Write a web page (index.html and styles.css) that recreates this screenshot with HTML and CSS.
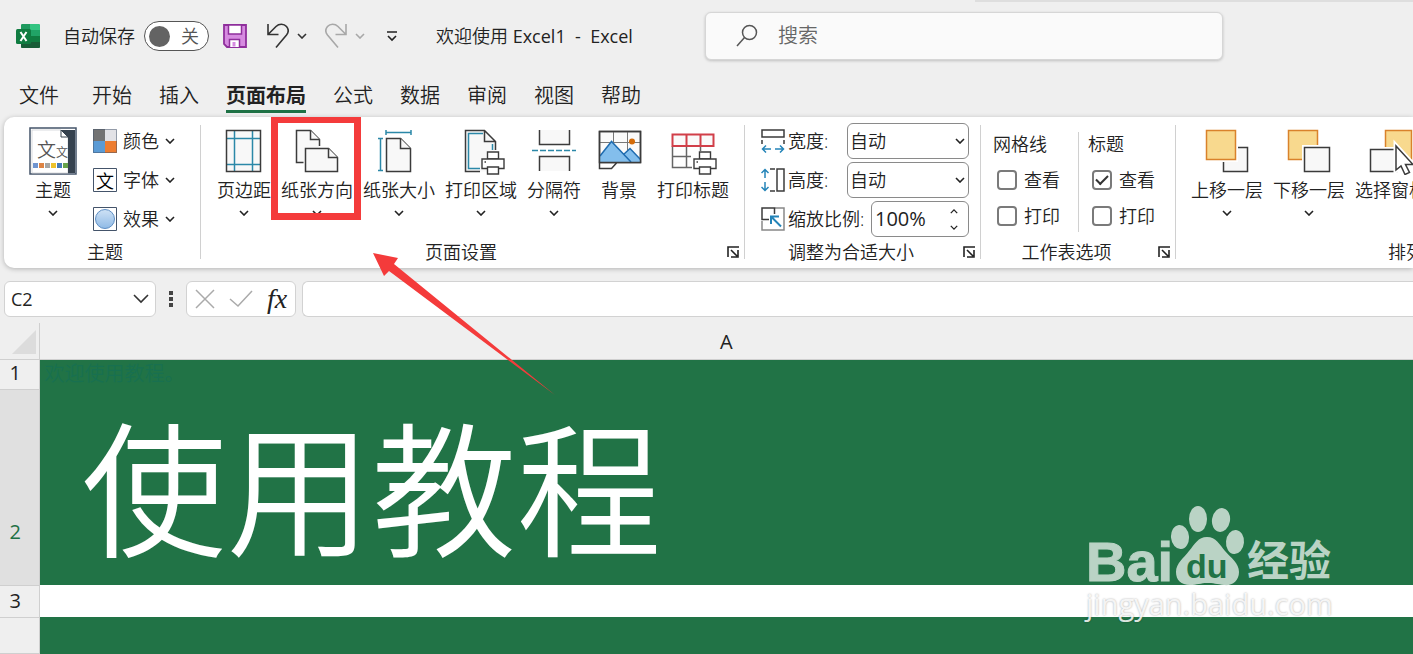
FILE: index.html
```html
<!DOCTYPE html>
<html lang="zh-CN">
<head>
  <title>欢迎使用 Excel1 - Excel</title>
  <meta name="viewport" content="width=device-width, initial-scale=1">
  <meta charset="UTF-8">
  <link rel="stylesheet" href="styles.css">
</head>
<body>
  <!-- shared icons -->
  <svg class="symbols" aria-hidden="true">
    <symbol id="chevron" viewBox="0 0 10 6"><path d="M1 1l4 4 4-4" fill="none" stroke="currentColor" stroke-width="1.6"/></symbol>
    <symbol id="launcher" viewBox="0 0 12 12"><path d="M1 11V1h11M4 4l6 6M11 4v7H4" fill="none" stroke="currentColor" stroke-width="1.6"/></symbol>
    <symbol id="printer" viewBox="0 0 24 24">
      <g fill="#fff" stroke="#3b3b3b" stroke-width="1.4">
        <path d="M6.500 1h11v7h-11z"/><path d="M1 8h22v9.500H1z"/><path d="M6.500 16h11v7h-11z"/>
      </g>
      <path d="M3.500 11h1.500" stroke="#3b3b3b"/>
    </symbol>
  </svg>

  <header class="title-bar">
    <svg class="logo" viewBox="0 0 24 24">
      <rect x="5" width="19" height="24" rx="1.500" fill="#21a366"/>
      <path d="M5 1.500A1.500 1.500 0 0 1 6.500 0H14v6H5z" fill="#1f9a5f"/>
      <path d="M14 0h8.500A1.500 1.500 0 0 1 24 1.500V6H14z" fill="#33c481"/>
      <path d="M5 12h19v10.500a1.500 1.500 0 0 1-1.500 1.500h-16A1.500 1.500 0 0 1 5 22.500z" fill="#185c37"/>
      <path d="M14 12h10v6H14z" fill="#107c41"/>
      <rect y="5" width="15" height="15" rx="1.500" fill="#107c41"/>
      <path d="M4.500 8l6 9M10.500 8l-6 9" stroke="#fff" stroke-width="2"/>
    </svg>
    <span class="autosave-label">自动保存</span>
    <button class="toggle"><span class="knob"></span>关</button>
    <button class="save" aria-label="保存">
      <svg width="24" height="24" viewBox="0 0 24 24">
        <path d="M1 1h22v22H4l-3-3z" fill="#d68be0" stroke="#8f2f9c" stroke-width="1.800"/>
        <path d="M5.500 1h13v9h-13z" fill="#fff" stroke="#8f2f9c" stroke-width="1.500"/>
        <path d="M6.500 23v-7.500h10V23" fill="#fff" stroke="#8f2f9c" stroke-width="1.500"/>
        <path d="M9.500 18h3v4.500h-3z" fill="#d68be0"/>
      </svg>
    </button>
    <button class="undo" aria-label="撤消">
      <svg width="22" height="26" viewBox="0 0 22 26"><path d="M1 1v10.500h10.500M1.500 11L9 3.500c3-3 8-3 10.500 0s2 6 0 8.500L9 24.500" fill="none" stroke="currentColor" stroke-width="1.600"/></svg>
      <svg width="10" height="6"><use href="#chevron"/></svg>
    </button>
    <button class="undo redo" aria-label="恢复">
      <svg width="22" height="26" viewBox="0 0 22 26"><path d="M21 1v10.500H10.500M20.500 11L13 3.500c-3-3-8-3-10.500 0s-2 6 0 8.500L13 24.500" fill="none" stroke="currentColor" stroke-width="1.600"/></svg>
      <svg width="10" height="6"><use href="#chevron"/></svg>
    </button>
    <button class="customize" aria-label="自定义快速访问工具栏">
      <svg width="12" height="12" viewBox="0 0 12 12"><path d="M1 2h10M2 6l4 4 4-4" fill="none" stroke="#222" stroke-width="1.600"/></svg>
    </button>
    <span class="doc-title">欢迎使用 <span class="latin">Excel1 &nbsp;-&nbsp; Excel</span></span>
    <label class="search">
      <svg width="22" height="24" viewBox="0 0 22 24"><circle cx="13.500" cy="8.500" r="7" fill="none" stroke="#555" stroke-width="1.500"/><path d="M8.500 13.500L1 22" stroke="#555" stroke-width="1.500"/></svg>
      <input type="text" placeholder="搜索" aria-label="搜索">
    </label>
  </header>

  <nav class="tabs">
    <a href="#" class="file">文件</a>
    <a href="#">开始</a>
    <a href="#">插入</a>
    <a href="#" class="active">页面布局</a>
    <a href="#">公式</a>
    <a href="#">数据</a>
    <a href="#">审阅</a>
    <a href="#">视图</a>
    <a href="#">帮助</a>
  </nav>

  <section class="ribbon">
    <div class="group themes">
      <div class="tools">
        <button class="large">
          <svg class="icon" viewBox="0 0 48 48">
            <rect x="1" y="1" width="46" height="46" fill="#fff" stroke="#44546a" stroke-width="1.500"/>
            <path d="M3 3h29l7 7v36H3z" fill="#fff" stroke="#c8ccd0" stroke-width=".7"/>
            <path d="M32 3h14v43h-7V10z" fill="#36424f"/>
            <path d="M32 3v7h7z" fill="#fff" stroke="#36424f"/>
            <text x="8" y="30" font-size="19" fill="#555">文</text>
            <text x="27" y="30" font-size="12" fill="#555">文</text>
            <path d="M4 36h5v5H4z" fill="#6f94cf"/><path d="M10 36h5v5h-5z" fill="#dd8344"/>
            <path d="M16 36h5v5h-5z" fill="#a5a5a5"/><path d="M22 36h5v5h-5z" fill="#edc22d"/>
            <path d="M28 36h5v5h-5z" fill="#447ab8"/><path d="M34 36h5v5h-5z" fill="#67a34b"/>
          </svg>
          <span>主题</span>
          <svg class="arrow"><use href="#chevron"/></svg>
        </button>
        <div class="stack">
          <button class="small">
            <svg width="24" height="24"><path d="M0 0h12v12H0z" fill="#737373"/><path d="M12 0h12v12H12z" fill="#e2e2e6"/><path d="M0 12h12v12H0z" fill="#5b9bd5"/><path d="M12 12h12v12H12z" fill="#ed7d31"/><path d="M.5.5h23v23H.5z" fill="none" stroke="#44546a" stroke-opacity=".5"/></svg>
            颜色
            <svg class="arrow"><use href="#chevron"/></svg>
          </button>
          <button class="small">
            <svg width="24" height="24"><path d="M.5.5h23v23H.5z" fill="#fff" stroke="#44546a"/><text x="3" y="20" font-size="18">文</text></svg>
            字体
            <svg class="arrow"><use href="#chevron"/></svg>
          </button>
          <button class="small">
            <svg width="24" height="24">
              <defs><linearGradient id="ball" x1="0" y1="0" x2="0" y2="1"><stop offset="0" stop-color="#cfe2f5"/><stop offset="1" stop-color="#8fbae6"/></linearGradient></defs>
              <path d="M.5.5h23v23H.5z" fill="#fff" stroke="#44546a"/><circle cx="12" cy="12" r="9.500" fill="url(#ball)" stroke="#5f8fc4"/>
            </svg>
            效果
            <svg class="arrow"><use href="#chevron"/></svg>
          </button>
        </div>
      </div>
      <div class="caption"><span>主题</span></div>
    </div>

    <div class="group page-setup">
      <div class="tools">
        <button class="large">
          <svg class="icon" viewBox="0 0 48 48">
            <path d="M6.500 3.500h34v41h-34z" fill="#f8f8f8"/>
            <path d="M14.500 4v40M32.500 4v40M7 11.500h33M7 37.500h33" stroke="#2b88a8" stroke-width="1.500"/>
            <path d="M6.500 3.500h34v41h-34z" fill="none" stroke="#3b3b3b" stroke-width="1.500"/>
          </svg>
          <span>页边距</span>
          <svg class="arrow"><use href="#chevron"/></svg>
        </button>
        <button class="large marked">
          <svg class="icon" viewBox="0 0 48 48" fill="#f8f8f8" stroke="#3b3b3b" stroke-width="1.500">
            <path d="M10.500 35.500h-7v-32h14l9 9V19"/><path d="M17.500 3.500v9h9"/>
            <path d="M12.500 21.500h23l9 9v14h-32z"/><path d="M35.500 21.500v9h9"/>
          </svg>
          <span>纸张方向</span>
          <svg class="arrow"><use href="#chevron"/></svg>
        </button>
        <button class="large">
          <svg class="icon" viewBox="0 0 48 48" fill="#f8f8f8" stroke="#3b3b3b" stroke-width="1.500">
            <path d="M11.500 11.500h14l10 10v23h-24z"/><path d="M25.500 11.500v10h10"/>
            <path d="M11 5.500h25M11 3v5M36 3v5M5.500 11v33M3 11.500h5M3 43.500h5" stroke="#2b88a8"/>
          </svg>
          <span>纸张大小</span>
          <svg class="arrow"><use href="#chevron"/></svg>
        </button>
        <button class="large">
          <svg class="icon" viewBox="0 0 48 48" fill="none" stroke="#3b3b3b" stroke-width="1.500">
            <path d="M8.500 3.500h19l11 11v30h-30z" fill="#f8f8f8" stroke="none"/>
            <path d="M23 44.500H8.500v-41h19l11 11V23M27.500 3.500v11h11"/>
            <path d="M23 41.500H11.500v-35H26M35.500 17v6" stroke="#2b88a8"/>
            <use href="#printer" x="24" y="24" width="24" height="24"/>
          </svg>
          <span>打印区域</span>
          <svg class="arrow"><use href="#chevron"/></svg>
        </button>
        <button class="large">
          <svg class="icon" viewBox="0 0 48 48" fill="#f8f8f8" stroke="#3b3b3b" stroke-width="1.500">
            <path d="M9.500 3v14.500h30V3M9.500 44V29.500h30V44"/>
            <path d="M2 23.500h44" stroke="#2b88a8" stroke-dasharray="6 2"/>
          </svg>
          <span>分隔符</span>
          <svg class="arrow"><use href="#chevron"/></svg>
        </button>
        <button class="large background">
          <svg class="icon" viewBox="0 0 48 48" fill="none" stroke="#3b3b3b" stroke-width="1.500">
            <path d="M4.500 4.500h41v31h-41z" fill="#fafafa"/>
            <path d="M18.500 5v12M32.500 5v20M5 15.500h40" stroke="#777" stroke-width="1"/>
            <circle cx="37" cy="14.500" r="3" fill="#d46b08" stroke="none"/>
            <path d="M5 29l11.500-14.500L36 35H5z" fill="#83beec" stroke="none"/>
            <path d="M28.500 27.500l6.500-6 10.500 11V35H36z" fill="#83beec" stroke="none"/>
            <path d="M5 29l11.500-14.500L36 35M28.500 27.500l6.500-6 10.500 11" stroke="#1f6cb0"/>
            <path d="M4.500 4.500h41v31h-41zM4.500 35.500v6h12l5-5.500"/>
          </svg>
          <span>背景</span>
        </button>
        <button class="large">
          <svg class="icon" viewBox="0 0 48 48" fill="none" stroke="#666" stroke-width="1.500">
            <path d="M3.500 19v21.500H23M17.500 19v21.500M3.500 29.500H22M31.500 19v5"/>
            <path d="M3.500 7.500h41v11.500h-41zM17.500 7.500V19M31.500 7.500V19" fill="#fafafa" stroke="#d13f49" stroke-width="2"/>
            <use href="#printer" x="24" y="24" width="24" height="24"/>
          </svg>
          <span>打印标题</span>
        </button>
      </div>
      <div class="caption"><span>页面设置</span><button class="launcher" aria-label="页面设置选项"><svg><use href="#launcher"/></svg></button></div>
    </div>

    <div class="group scale">
      <div class="fields">
        <div class="field">
          <svg width="24" height="24" fill="none" stroke="#3b3b3b" stroke-width="1.500"><path d="M1 1h22v7H1zM1 11v4M23 11v4"/><path d="M10 20H1.500M5 16.500L1.500 20 5 23.500M14 20h8.500M19 16.500l3.500 3.500-3.500 3.500" stroke="#2484b8"/></svg>
          <label for="width">宽度:</label>
          <div class="select"><select id="width"><option>自动</option></select><svg class="arrow"><use href="#chevron"/></svg></div>
        </div>
        <div class="field">
          <svg width="24" height="24" fill="none" stroke="#3b3b3b" stroke-width="1.500"><path d="M16 1h7v22h-7zM9 1h5M9 23h5"/><path d="M4 10V1.500M.5 5L4 1.500 7.500 5M4 14v8.500M.5 19L4 22.500 7.500 19" stroke="#2484b8"/></svg>
          <label for="height">高度:</label>
          <div class="select"><select id="height"><option>自动</option></select><svg class="arrow"><use href="#chevron"/></svg></div>
        </div>
        <div class="field">
          <svg width="24" height="24" fill="none" stroke="#3b3b3b" stroke-width="1.500"><path d="M14 1h9v22H1V14" stroke="#888"/><path d="M8 12.500H1V1h12.500v6"/><path d="M20 19.500L10 9.500M10 17V9.500h8" stroke="#2484b8" stroke-width="2"/></svg>
          <label for="zoom">缩放比例:</label>
          <div class="spinner">
            <input type="text" id="zoom" value="100%">
            <div class="steps">
              <button class="up" aria-label="增大"><svg><use href="#chevron"/></svg></button>
              <button aria-label="减小"><svg><use href="#chevron"/></svg></button>
            </div>
          </div>
        </div>
      </div>
      <div class="caption"><span>调整为合适大小</span><button class="launcher" aria-label="调整选项"><svg><use href="#launcher"/></svg></button></div>
    </div>

    <div class="group sheet-options">
      <div class="options">
        <div class="option-set">
          <h3>网格线</h3>
          <label><input type="checkbox">查看</label>
          <label><input type="checkbox">打印</label>
        </div>
        <div class="option-set">
          <h3>标题</h3>
          <label><input type="checkbox" checked>查看</label>
          <label><input type="checkbox">打印</label>
        </div>
      </div>
      <div class="caption"><span>工作表选项</span><button class="launcher" aria-label="工作表选项"><svg><use href="#launcher"/></svg></button></div>
    </div>

    <div class="group arrange">
      <div class="tools">
        <button class="large">
          <svg class="icon" viewBox="0 0 48 48" stroke-width="1.500">
            <path d="M35 20.500h9.500v24h-24V35" fill="#f8f8f8" stroke="#3b3b3b"/>
            <path d="M18 18h17v17H18z" fill="#fff"/>
            <path d="M3.500 3.500h29v29h-29z" fill="#f8d98e" stroke="#d9822b"/>
          </svg>
          <span>上移一层</span>
          <svg class="arrow"><use href="#chevron"/></svg>
        </button>
        <button class="large">
          <svg class="icon" viewBox="0 0 48 48" stroke-width="1.500">
            <path d="M3.500 3.500h29v29h-29z" fill="#f8d98e" stroke="#d9822b"/>
            <path d="M17 18h17v16H17z" fill="#fff"/>
            <path d="M19.500 20.500h25v24h-25z" fill="#f8f8f8" stroke="#3b3b3b"/>
          </svg>
          <span>下移一层</span>
          <svg class="arrow"><use href="#chevron"/></svg>
        </button>
        <button class="large">
          <svg class="icon" viewBox="0 0 48 48" stroke-width="1.500">
            <path d="M18.500 3.500h26v29h-26z" fill="#f8d98e" stroke="#d9822b"/>
            <path d="M16 20h13v13H16z" fill="#fff"/>
            <path d="M3.500 22.500h26v22h-26z" fill="#f8f8f8" stroke="#3b3b3b"/>
            <path d="M29 19v24l5-4 4 8.500 4.500-2-4-8H46z" fill="#fff" stroke="#fff" stroke-width="5"/>
            <path d="M29 19v24l5-4 4 8.500 4.500-2-4-8H46z" fill="#fff" stroke="#3b3b3b"/>
          </svg>
          <span>选择窗格</span>
        </button>
      </div>
      <div class="caption"><span>排列</span></div>
    </div>
  </section>

  <div class="formula-bar">
    <div class="name-box">
      <input type="text" value="C2" aria-label="名称框">
      <svg width="16" height="10" viewBox="0 0 16 10"><path d="M1 1l7 7 7-7" fill="none" stroke="#333" stroke-width="1.600"/></svg>
    </div>
    <svg class="dots" width="4" height="16"><path d="M0 0h4v4H0zM0 6h4v4H0zM0 12h4v4H0z" fill="#444"/></svg>
    <div class="entry">
      <button aria-label="取消"><svg width="20" height="20"><path d="M1 1l18 18M19 1L1 19" stroke="#aaa" stroke-width="1.500"/></svg></button>
      <button aria-label="输入"><svg width="24" height="20"><path d="M1 10l8 7L23 2" fill="none" stroke="#aaa" stroke-width="1.500"/></svg></button>
      <button class="fx">fx</button>
    </div>
    <input type="text" class="formula" aria-label="编辑栏">
  </div>

  <main class="sheet">
    <table>
      <tr class="columns">
        <th><svg width="24" height="24"><path d="M24 0v24H0z" fill="#dcdcdc"/></svg></th>
        <th>A</th>
      </tr>
      <tr class="intro"><th>1</th><td>欢迎使用教程。</td></tr>
      <tr class="heading"><th>2</th><td>使用教程</td></tr>
      <tr class="blank"><th>3</th><td></td></tr>
      <tr class="rest"><th></th><td></td></tr>
    </table>
  </main>

  <svg class="pointer" width="184" height="144" viewBox="0 0 184 144"><path d="M1 1l25 5-4 6 161 131L17 19l-5 5z" fill="#f43b3b"/></svg>

  <div class="watermark">
    <div class="brand">
      <span class="bai">Bai</span>
      <svg width="76" height="82" viewBox="0 0 76 82">
        <g fill="currentColor">
          <ellipse cx="10" cy="33" rx="9" ry="12" transform="rotate(-5 10 33)"/>
          <ellipse cx="28" cy="15" rx="9" ry="13"/>
          <ellipse cx="51" cy="16" rx="9" ry="12" transform="rotate(10 51 16)"/>
          <ellipse cx="65" cy="38" rx="9" ry="12" transform="rotate(5 65 38)"/>
          <path d="M37 33c9 0 13 8 18 14 6 7 14 12 14 21 0 9-7 14-15 13-7-1-11-2-17-2s-10 2-17 2C11 81 6 76 6 68c0-9 8-14 13-21 6-7 9-14 18-14z"/>
        </g>
        <text x="16" y="74" font-size="34" fill="#217346">du</text>
      </svg>
      <span class="jingyan">经验</span>
    </div>
    <div class="site">jingyan.baidu.com</div>
  </div>
</body>
</html>
```
FILE: styles.css
```css
* {
  box-sizing: border-box;
}
body {
  display: flex;
  flex-direction: column;
  font-family: "Open Sans", "Noto Sans CJK SC", sans-serif;
  font-size: 18px;
  font-weight: 350;
  line-height: 24px;
  margin: 0;
  height: 100vh;
  overflow: hidden;
  position: relative;
  background: #efefef;
  color: #222;
}
button {
  font: inherit;
  color: inherit;
  background: none;
  border: 0;
  padding: 0;
  white-space: nowrap;
}
input, select {
  font: inherit;
  color: inherit;
}
svg {
  flex-shrink: 0;
}
.symbols {
  position: absolute;
  width: 0;
  height: 0;
}
.arrow {
  width: 10px;
  height: 6px;
}

/* title bar */
.title-bar {
  display: flex;
  align-items: center;
  flex-shrink: 0;
  height: 72px;
  padding-left: 16px;
  position: relative;
}
.title-bar::after {
  content: "";
  position: absolute;
  top: 0;
  right: 0;
  width: 31%;
  height: 2px;
  background: #dedede;
}
.logo {
  width: 24px;
  height: 24px;
  margin-right: 23px;
}
.toggle {
  display: flex;
  align-items: center;
  gap: 11px;
  width: 65px;
  height: 30px;
  margin: 0 14px 0 9px;
  padding-left: 4px;
  border: 1px solid #555;
  border-radius: 15px;
  background: #fff;
  color: #555;
}
.knob {
  width: 21px;
  height: 21px;
  border-radius: 50%;
  background: #636363;
}
.save {
  height: 24px;
  margin-right: 20px;
}
.undo {
  display: flex;
  align-items: center;
  gap: 8px;
  margin-right: 18px;
  color: #333;
}
.redo {
  color: #a8a8a8;
  margin-right: 21px;
}
.customize {
  height: 12px;
  display: flex;
}
.doc-title {
  width: 269px;
  margin-left: 38px;
  white-space: nowrap;
}
.latin {
  font-weight: 400;
}
.search {
  display: flex;
  align-items: center;
  gap: 20px;
  flex: 0 1 518px;
  height: 48px;
  padding: 0 30px;
  border: 1px solid #d6d6d6;
  border-radius: 6px;
  background: #fafafa;
  box-shadow: 0 1px 3px rgba(0,0,0,0.2);
}
.search input {
  flex: 1;
  min-width: 0;
  border: 0;
  padding: 0;
  background: none;
  font-size: 20px;
}
.search input::placeholder {
  color: #666;
}

/* tabs */
.tabs {
  display: flex;
  flex-shrink: 0;
  gap: 27px;
  height: 45px;
  padding: 10px 19px 4px;
  font-size: 20px;
  line-height: 28px;
}
.tabs a {
  color: #222;
  text-decoration: none;
  white-space: nowrap;
  border-bottom: 3px solid transparent;
}
.tabs .file {
  margin-right: 6px;
}
.tabs .active {
  font-weight: 700;
  border-color: #1e7145;
}

/* ribbon */
.ribbon {
  display: flex;
  flex-shrink: 0;
  height: 151px;
  margin-left: 4px;
  overflow: hidden;
  background: #fff;
  border-radius: 10px 0 0 10px;
  box-shadow: 0 1px 5px rgba(0,0,0,0.25);
}
.group {
  display: flex;
  flex-direction: column;
  justify-content: space-between;
  flex-shrink: 0;
  position: relative;
  padding: 6px 0 4px;
}
.group::after {
  content: "";
  position: absolute;
  top: 8px;
  bottom: 9px;
  right: 0;
  width: 1px;
  background: #d0d0d0;
}
.tools {
  display: flex;
  align-items: flex-start;
  gap: 10px;
}
.caption {
  display: flex;
  align-items: center;
}
.caption span {
  flex: 1;
  text-align: center;
}
.launcher {
  width: 24px;
  height: 12px;
  display: flex;
  justify-content: center;
}
.launcher svg {
  width: 12px;
  height: 12px;
}
.large {
  display: flex;
  flex-direction: column;
  align-items: center;
  position: relative;
  padding-top: 4px;
}
.large .icon {
  width: 48px;
  height: 48px;
  margin-bottom: 3px;
}
.large .arrow {
  margin-top: 8px;
}
.background {
  width: 56px;
}
/* red frame round the button being explained */
.marked::after {
  content: "";
  position: absolute;
  inset: -7px -8px -4px -10px;
  border: 7px solid #f43b3b;
}
.ribbon .marked {
  z-index: 1;
}
.themes {
  width: 197px;
}
.themes .tools {
  gap: 16px;
  padding-left: 25px;
}
.themes .caption {
  padding-left: 5px;
}
.stack {
  display: flex;
  flex-direction: column;
  gap: 15px;
  padding-top: 6px;
}
.small {
  display: flex;
  align-items: center;
  gap: 6px;
}
.page-setup {
  width: 544px;
}
.page-setup .tools {
  padding-left: 16px;
}

.scale {
  width: 236px;
}
.fields {
  display: flex;
  flex-direction: column;
  gap: 3px;
  padding: 0 12px 0 16px;
}
.field {
  display: flex;
  align-items: center;
  gap: 3px;
  white-space: nowrap;
}
.select {
  width: 122px;
  height: 36px;
  margin-left: auto;
  position: relative;
}
.select select {
  appearance: none;
  width: 100%;
  height: 100%;
  padding: 0 2px;
  border: 1px solid #8a8a8a;
  border-radius: 6px;
  background: #fff;
}
.select .arrow {
  position: absolute;
  right: 4px;
  top: 15px;
  pointer-events: none;
}
.spinner {
  display: flex;
  align-items: center;
  width: 98px;
  height: 36px;
  margin-left: auto;
  border: 1px solid #8a8a8a;
  border-radius: 6px;
  background: #fff;
}
.spinner input {
  width: 72px;
  border: 0;
  padding: 0 3px;
  background: none;
  font-size: 20px;
  font-weight: 400;
}
.steps {
  display: flex;
  flex-direction: column;
  gap: 11px;
  margin-left: 6px;
}
.steps button {
  display: flex;
}
.steps svg {
  width: 8px;
  height: 5px;
}
.up {
  transform: rotate(180deg);
}

.sheet-options {
  width: 195px;
}
.options {
  display: flex;
  padding-top: 9px;
}
.option-set {
  width: 98px;
  height: 100px;
  padding-left: 12px;
  border-right: 1px solid #d0d0d0;
}
.option-set + .option-set {
  width: 90px;
  padding-left: 9px;
  border: 0;
}
.option-set h3 {
  margin: 0 0 6px;
  font-size: 18px;
  font-weight: inherit;
}
.option-set label {
  display: flex;
  align-items: center;
  gap: 7px;
  height: 36px;
  padding-left: 4px;
}
.option-set input {
  appearance: none;
  width: 20px;
  height: 20px;
  margin: 0;
  border: 2px solid #7a7a7a;
  border-radius: 4px;
  background: #fff;
  display: grid;
  place-items: center;
}
.option-set input:checked::before {
  content: "";
  width: 10px;
  height: 5px;
  margin-bottom: 3px;
  border: solid #333;
  border-width: 0 0 2px 2px;
  transform: rotate(-45deg);
}
.arrange {
  width: 460px;
}
.arrange .tools {
  padding-left: 15px;
}

/* formula bar */
.formula-bar {
  display: flex;
  align-items: center;
  flex-shrink: 0;
  height: 36px;
  margin: 13px 0 6px 4px;
}
.name-box, .entry, .formula {
  height: 36px;
  border: 1px solid #d2d2d2;
  border-radius: 6px;
  background: #fff;
}
.name-box {
  display: flex;
  align-items: center;
  width: 152px;
  padding: 0 6px;
}
.name-box input {
  flex: 1;
  min-width: 0;
  border: 0;
  padding: 0;
  font-weight: 400;
}
.dots {
  margin: 0 13px;
}
.entry {
  display: flex;
  align-items: center;
  gap: 14px;
  width: 110px;
  padding-left: 8px;
  margin-right: 6px;
}
.entry button {
  display: flex;
}
.entry .fx {
  font-family: "Liberation Serif", serif;
  font-size: 28px;
  font-style: italic;
}
.formula {
  flex: 1;
  border-right: 0;
  border-radius: 6px 0 0 6px;
}

/* sheet */
.sheet {
  flex: 1;
  min-height: 0;
}
.sheet table {
  width: 100%;
  height: 100%;
  table-layout: fixed;
  border-collapse: collapse;
}
.sheet th {
  padding: 0;
  font-size: 20px;
  font-weight: 400;
  border-bottom: 1px solid #cfcfcf;
}
.sheet th:first-child {
  width: 39px;
  padding-right: 8px;
  border-right: 1px solid #cfcfcf;
}
.sheet td {
  padding: 0;
  background: #217346;
}
.sheet .columns th {
  height: 36px;
  padding-top: 3px;
}
.sheet .columns th:first-child {
  padding: 0 3px 0 0;
  text-align: right;
}
.columns svg {
  display: inline-block;
  vertical-align: middle;
}
.sheet .intro td {
  height: 30px;
  padding: 0 0 1px 5px;
  font-size: 20px;
  line-height: 26px;
  color: #187050;
}
.sheet .intro th {
  padding-bottom: 3px;
}
.sheet .heading td {
  height: 196px;
  padding: 6px 0 0 42px;
  font-size: 145px;
  line-height: 180px;
  color: #fff;
}
.sheet .heading th {
  padding-top: 90px;
  background: #e0e0e0;
  color: #1e7145;
}
.sheet .blank td {
  height: 32px;
  background: #fff;
}

.pointer {
  position: absolute;
  left: 372px;
  top: 252px;
}
.watermark {
  position: absolute;
  right: 77px;
  bottom: 32px;
  width: 250px;
  color: #bad3c5;
}
.brand {
  display: flex;
  align-items: flex-end;
  height: 82px;
  font-family: "Liberation Sans", "Noto Sans CJK SC", sans-serif;
  font-weight: 700;
}
.bai {
  width: 84px;
  font-size: 56px;
  line-height: 48px;
  -webkit-text-stroke: 1px;
}
.jingyan {
  margin-left: 1px;
  font-size: 42px;
  line-height: 48px;
}
.site {
  font-size: 29px;
  font-weight: 400;
  line-height: 36px;
  color: rgba(255,255,255,0.85);
  text-shadow: 0 0 2px rgba(0,0,0,0.35);
}
```
